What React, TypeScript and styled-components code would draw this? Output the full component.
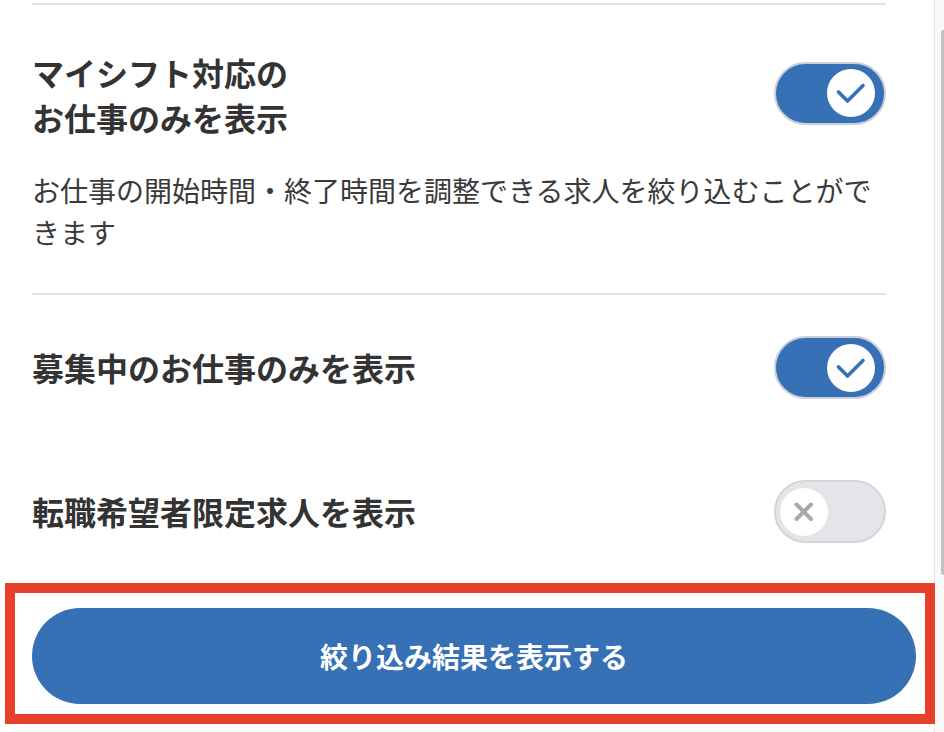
import React, { useState } from "react";
import styled, { createGlobalStyle } from "styled-components";

const GlobalStyle = createGlobalStyle`
  html, body { margin: 0; padding: 0; background: #ffffff; }
  body {
    font-family: "Noto Sans CJK JP", "Noto Sans", sans-serif;
    color: #333333;
    overflow: hidden;
  }
`;

const BLUE = "#3670b5";

const Page = styled.div`
  display: flex;
  width: 944px;
  height: 732px;
  overflow: hidden;
`;

const Main = styled.main`
  position: relative;
  flex: 1;
  min-width: 0;
  display: flex;
  flex-direction: column;
  padding: 3px 48px 0 32px;
`;

const ScrollTrack = styled.div`
  flex: none;
  width: 9px;
  border-left: 1px solid #e6e6e6;
  background: #f9f9f9;
  display: flex;
  justify-content: flex-end;
  padding-top: 30px;
`;

const ScrollThumb = styled.div`
  width: 3px;
  height: 545px;
  border-radius: 2px 0 0 2px;
  background: #c2c2c2;
`;

const Divider = styled.hr`
  margin: 0;
  border: none;
  height: 2px;
  background: #e3e3e8;
`;

const Section = styled.section`
  padding: 45px 0 40px;
`;

const Row = styled.div<{ $top?: number; $toggleShift?: number }>`
  display: flex;
  align-items: center;
  justify-content: space-between;
  min-height: 62px;
  margin-top: ${(p) => p.$top ?? 0}px;
  & > button {
    margin-top: ${(p) => p.$toggleShift ?? 0}px;
  }
`;

const Title = styled.h2`
  margin: 0;
  font-size: 32px;
  line-height: 45px;
  font-weight: 700;
  color: #333333;
  letter-spacing: 0;
`;

const Description = styled.p`
  margin: 29px 0 0;
  font-size: 28px;
  line-height: 42px;
  font-weight: 400;
  color: #3a3a3a;
`;

const Track = styled.button<{ $on: boolean }>`
  flex: none;
  width: 112px;
  height: 63px;
  border-radius: 32px;
  border: 2px solid ${(p) => (p.$on ? "#c9d0da" : "#d3d5da")};
  background: ${(p) => (p.$on ? BLUE : "#e4e5e9")};
  cursor: pointer;
  display: flex;
  align-items: center;
  justify-content: ${(p) => (p.$on ? "flex-end" : "flex-start")};
  padding: 0 9px 0 4px;
`;

const Knob = styled.span`
  width: 48px;
  height: 48px;
  border-radius: 50%;
  background: #ffffff;
  display: flex;
  align-items: center;
  justify-content: center;
`;

const Footer = styled.div`
  position: relative;
  margin: 40px -48px 0 -32px;
  padding: 25px 18px 20px 32px;
`;

const Highlight = styled.div`
  position: absolute;
  left: 5px;
  top: 0;
  width: 930px;
  height: 141px;
  box-sizing: border-box;
  border: 10px solid #e8402a;
  pointer-events: none;
`;

const SubmitButton = styled.button`
  display: block;
  width: 884px;
  height: 96px;
  border: none;
  border-radius: 48px;
  background: ${BLUE};
  color: #ffffff;
  font-family: "Noto Sans CJK JP", "Noto Sans", sans-serif;
  font-size: 28px;
  font-weight: 700;
  letter-spacing: 0;
  cursor: pointer;
`;

function Toggle({ on, onClick }: { on: boolean; onClick: () => void }) {
  return (
    <Track $on={on} onClick={onClick} aria-pressed={on}>
      <Knob>
        {on ? (
          <svg width="48" height="48" viewBox="0 0 48 48">
            <path
              d="M11.5 23 L20.5 32 L36 16.5"
              fill="none"
              stroke={BLUE}
              strokeWidth="3.6"
              strokeLinecap="round"
              strokeLinejoin="round"
            />
          </svg>
        ) : (
          <svg width="48" height="48" viewBox="0 0 48 48">
            <path
              d="M16.5 16.5 L31 31 M31 16.5 L16.5 31"
              fill="none"
              stroke="#a9a9a9"
              strokeWidth="4"
              strokeLinecap="round"
            />
          </svg>
        )}
      </Knob>
    </Track>
  );
}

export default function App() {
  const [a, setA] = useState(true);
  const [b, setB] = useState(true);
  const [c, setC] = useState(false);
  return (
    <>
      <GlobalStyle />
      <Page>
        <Main>
          <Divider />
          <Section>
            <Row $toggleShift={-4}>
              <Title>
                マイシフト対応の
                <br />
                お仕事のみを表示
              </Title>
              <Toggle on={a} onClick={() => setA(!a)} />
            </Row>
            <Description>
              お仕事の開始時間・終了時間を調整できる求人を絞り込むことができます
            </Description>
          </Section>
          <Divider />
          <Row $top={41}>
            <Title>募集中のお仕事のみを表示</Title>
            <Toggle on={b} onClick={() => setB(!b)} />
          </Row>
          <Row $top={81}>
            <Title>転職希望者限定求人を表示</Title>
            <Toggle on={c} onClick={() => setC(!c)} />
          </Row>
          <Footer>
            <SubmitButton>絞り込み結果を表示する</SubmitButton>
            <Highlight />
          </Footer>
        </Main>
        <ScrollTrack>
          <ScrollThumb />
        </ScrollTrack>
      </Page>
    </>
  );
}
